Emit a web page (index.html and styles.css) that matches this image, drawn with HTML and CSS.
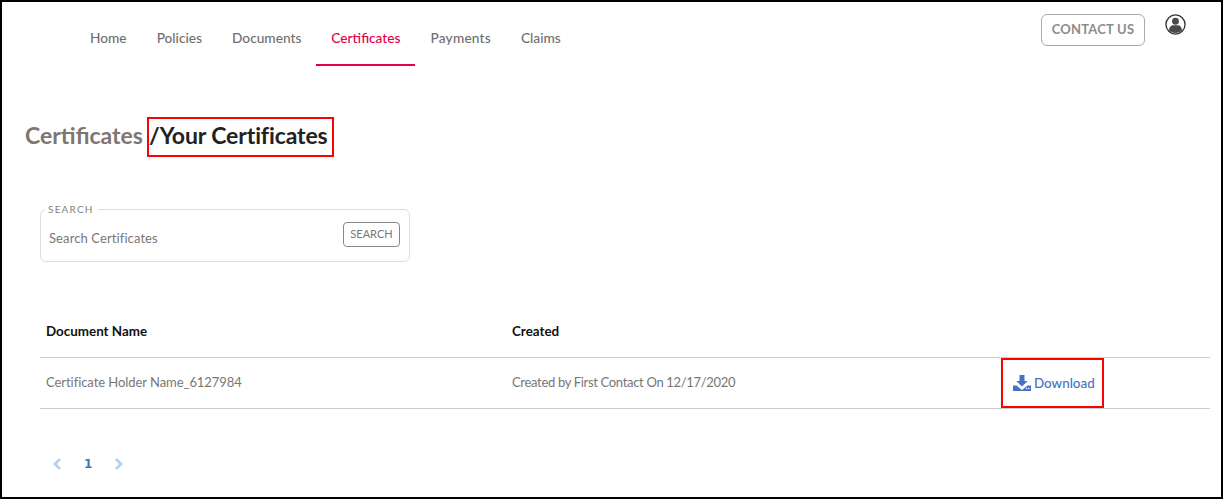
FILE: index.html
```html
<!DOCTYPE html>
<html lang="en">
<head>
  <meta charset="UTF-8" />
  <title>Your Certificates</title>
  <link rel="stylesheet" href="styles.css">
</head>
<body>
  <div class="frame">
    <header class="topbar">
      <nav class="nav">
        <a href="#">Home</a>
        <a href="#">Policies</a>
        <a href="#">Documents</a>
        <a href="#" class="active">Certificates</a>
        <a href="#" class="payments">Payments</a>
        <a href="#">Claims</a>
      </nav>
      <div class="top-actions">
        <button class="contact-btn">CONTACT US</button>
        <svg class="user-icon" viewBox="0 0 22 22" width="21" height="21">
          <circle cx="11" cy="11" r="10" fill="#fff" stroke="#333" stroke-width="1.4"/>
          <circle cx="11" cy="7.6" r="3.6" fill="#4a4a4a"/>
          <path d="M4.2 17.2c0-3.6 2.6-5.4 4.4-5.4h4.8c1.8 0 4.4 1.8 4.4 5.4-1.8 1.6-4.2 2.6-6.8 2.6s-5-1-6.8-2.6z" fill="#4a4a4a"/>
        </svg>
      </div>
    </header>

    <h1 class="page-title">
      <span class="crumb">Certificates</span>
      <span class="current">/Your Certificates</span>
    </h1>

    <fieldset class="search-box">
      <legend>SEARCH</legend>
      <span class="search-text">Search Certificates</span>
      <button class="search-btn">SEARCH</button>
    </fieldset>

    <table class="doc-table">
      <thead>
        <tr>
          <th class="col-name">Document Name</th>
          <th class="col-created">Created</th>
          <th></th>
        </tr>
      </thead>
      <tbody>
        <tr>
          <td class="cell-name">Certificate Holder Name_6127984</td>
          <td class="cell-created">Created by First Contact On 12/17/2020</td>
          <td class="cell-download">
            <a href="#" class="download">
              <svg viewBox="0 0 18 16" width="18" height="16">
                <path d="M6.5 0h5v6h3.2L9 11.6 3.300 6h3.200z" fill="#4472c4"/>
                <path d="M0 10.500h3.500L9 15l5.500-4.500H18V16H0z" fill="#4472c4"/>
                <rect x="13" y="12.800" width="1.300" height="1.300" fill="#fff"/>
                <rect x="15.200" y="12.800" width="1.300" height="1.300" fill="#fff"/>
              </svg>
              Download
            </a>
          </td>
        </tr>
      </tbody>
    </table>

    <div class="pager">
      <svg viewBox="0 0 10 14" width="10" height="14"><path d="M8 2L3 7l5 5" fill="none" stroke="#b4cff0" stroke-width="2.800"/></svg>
      <span class="page-num">1</span>
      <svg viewBox="0 0 10 14" width="10" height="14"><path d="M2 2l5 5-5 5" fill="none" stroke="#b4cff0" stroke-width="2.800"/></svg>
    </div>
  </div>
</body>
</html>
```

FILE: styles.css
```css
* {
  box-sizing: border-box;
}

body {
  margin: 0;
  font-family: 'Lato', sans-serif;
  background-color: white;
  color: #777;
}

.frame {
  height: 499px;
  border: 2px solid black;
  overflow: hidden;
}

.topbar {
  display: flex;
  justify-content: space-between;
  align-items: flex-start;
  height: 64px;
}

.nav {
  display: flex;
  margin-left: 73px;
}

.nav a {
  height: 64px;
  padding: 27px 15px 0;
  font-size: 13.7px;
  line-height: 17px;
  font-weight: 500;
  color: #6f6f6f;
  text-decoration: none;
}

.nav a.active {
  color: #e6004c;
  border-bottom: 2px solid #e6004c;
}

.nav a.payments {
  letter-spacing: 0.2px;
}

.top-actions {
  display: flex;
  align-items: flex-start;
  gap: 20px;
  margin: 12px 35px 0 0;
}

.contact-btn {
  width: 104px;
  height: 32px;
  background: white;
  border: 1px solid #aaa;
  border-radius: 6px;
  font-family: inherit;
  font-size: 13px;
  font-weight: 700;
  letter-spacing: 0.2px;
  color: #8c8c8c;
  padding: 0 0 2px;
}

.user-icon {
  display: block;
}

.page-title {
  display: flex;
  align-items: center;
  margin: 51px 0 0 23px;
  height: 40px;
  font-size: 23px;
  font-weight: 700;
}

.crumb {
  color: #7d7672;
  margin: 0 4px 4px 0;
}

.current {
  color: #222;
  border: 2px solid #f00;
  padding: 0 4px 0 0;
  height: 40px;
  line-height: 32px;
  letter-spacing: -0.12px;
}

.search-box {
  display: flex;
  align-items: center;
  justify-content: space-between;
  width: 370px;
  height: 59px;
  margin: 46px 0 0 38px;
  padding: 0 9px 0 8px;
  border: 1px solid #ddd;
  border-radius: 6px;
}

.search-box legend {
  padding: 0 4px 0 3px;
  margin-left: -4px;
  font-size: 10px;
  letter-spacing: 1.2px;
  line-height: 12px;
  color: #8a8178;
}

.search-text {
  font-size: 13px;
  letter-spacing: 0.1px;
  color: #777;
}

.search-btn {
  width: 57px;
  height: 25px;
  background: white;
  border: 1px solid #888;
  border-radius: 4px;
  font-family: inherit;
  font-size: 11px;
  color: #777;
  padding: 0 0 2px;
  margin-bottom: 8px;
}

.doc-table {
  width: 1170px;
  margin: 44px 0 0 38px;
  border-collapse: collapse;
  table-layout: fixed;
}

.doc-table th {
  height: 51px;
  padding: 0 6px;
  text-align: left;
  font-size: 13.4px;
  font-weight: 700;
  color: #111;
  border-bottom: 1px solid #ccc;
}

.col-name {
  width: 466px;
}

.col-created {
  width: 500px;
}

.doc-table td {
  height: 51px;
  padding: 0 6px 2px;
  font-size: 13px;
  color: #777;
  border-bottom: 1px solid #ccc;
}

.doc-table td.cell-name {
  letter-spacing: -0.06px;
}

.doc-table td.cell-created {
  letter-spacing: -0.32px;
}

.doc-table td.cell-download {
  padding: 0;
}

.download {
  display: flex;
  align-items: center;
  gap: 3px;
  width: 103px;
  height: 50px;
  margin-left: -5px;
  padding-left: 10px;
  border: 2px solid #f00;
  font-size: 13.4px;
  font-weight: 500;
  color: #4472c4;
  text-decoration: none;
}

.pager {
  display: flex;
  align-items: center;
  gap: 22px;
  margin: 48px 0 0 50px;
}

.page-num {
  font-family: 'DejaVu Sans', sans-serif;
  font-size: 12px;
  font-weight: 700;
  color: #4472c4;
}
```
